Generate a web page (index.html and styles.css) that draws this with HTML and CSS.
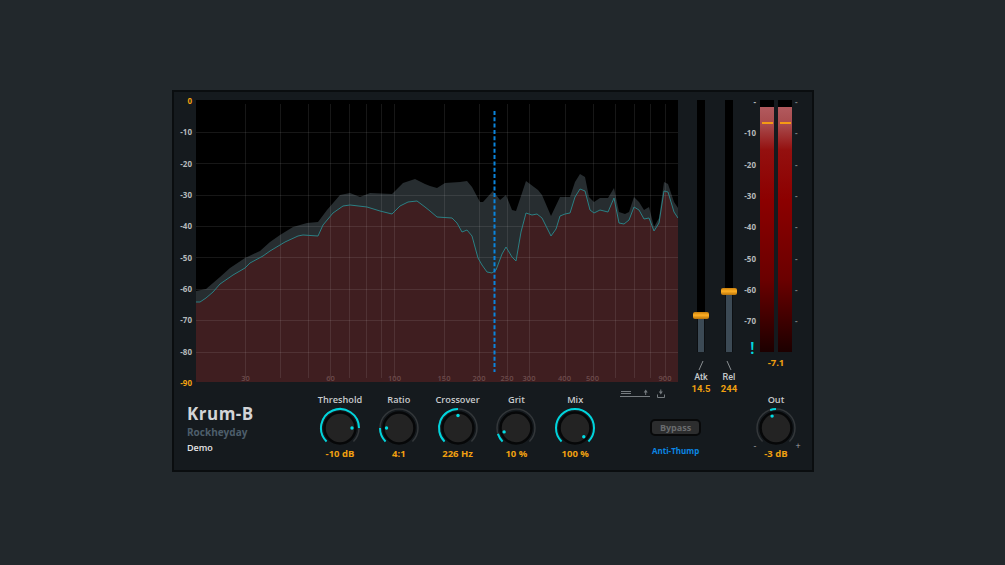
FILE: index.html
```html
<!DOCTYPE html>
<html lang="en">

<head>
  <meta charset="UTF-8" />
  <meta name="viewport" content="width=device-width, initial-scale=1.0" />
  <title>Krum-B</title>
  <link rel="stylesheet" href="styles.css">
</head>

<body>
  <div class="plugin">

    <div class="top-row">
      <div class="axis">
        <span class="axis-end">0</span>
        <span>-10</span>
        <span>-20</span>
        <span>-30</span>
        <span>-40</span>
        <span>-50</span>
        <span>-60</span>
        <span>-70</span>
        <span>-80</span>
        <span class="axis-end">-90</span>
      </div>

      <!-- spectrum, viewBox is in page pixels -->
      <svg class="graph" width="482" height="282" viewBox="196 100 482 282">
        <rect class="graph-bg" x="196" y="100" width="482" height="282" />
        <polygon class="env-fill" points="196,291 206,289 220,277 230,268 245,258 260,251 270,242 280,235 293,227 307,223 318,222 327,210 340,195 350,193 360,197 370,193 392,194 403,183 415,179 425,184 430,186 437,188 445,183 460,182 467,181 472,187 480,202 483,202 493,191 500,200 506,195 512,210 516,211 526,181 538,190 542,195 551,216 560,197 570,197 575,182 580,174 585,177 589,197 594,202 600,198 608,198 614,188 619,212 625,214 629,212 634,197 639,202 644,210 649,207 654,227 659,218 664,182 668,184 674,202 678,208 678,382 196,382" />
        <polygon class="spec-fill" points="196,302 200,302 206,298 213,292 220,284 233,275 245,268 250,263 263,256 270,251 285,242 298,236 303,235 318,236 323,225 333,213 343,206 350,205 367,207 380,211 392,214 400,206 408,202 417,201 425,207 430,211 437,217 452,218 457,223 462,232 467,230 472,236 478,258 482,265 487,272 492,273 496,270 502,254 506,247 512,257 516,261 521,232 526,213 532,215 537,214 542,218 551,236 556,229 560,216 565,214 570,213 575,197 580,189 585,191 590,210 594,213 600,210 608,212 614,198 619,223 624,224 629,220 634,207 639,210 644,219 649,218 654,231 659,223 664,191 668,192 674,212 678,218 678,382 196,382" />
        <g class="grid-lines">
          <line x1="196" x2="678" y1="132.500" y2="132.500" />
          <line x1="196" x2="678" y1="163.500" y2="163.500" />
          <line x1="196" x2="678" y1="195.500" y2="195.500" />
          <line x1="196" x2="678" y1="226.500" y2="226.500" />
          <line x1="196" x2="678" y1="257.500" y2="257.500" />
          <line x1="196" x2="678" y1="289.500" y2="289.500" />
          <line x1="196" x2="678" y1="320.500" y2="320.500" />
          <line x1="196" x2="678" y1="352.500" y2="352.500" />
          <line x1="245.500" x2="245.500" y1="104" y2="378" />
          <line x1="280.500" x2="280.500" y1="104" y2="378" />
          <line x1="308.500" x2="308.500" y1="104" y2="378" />
          <line x1="330.500" x2="330.500" y1="104" y2="378" />
          <line x1="349.500" x2="349.500" y1="104" y2="378" />
          <line x1="366.500" x2="366.500" y1="104" y2="378" />
          <line x1="381.500" x2="381.500" y1="104" y2="378" />
          <line x1="394.500" x2="394.500" y1="104" y2="378" />
          <line x1="444.500" x2="444.500" y1="104" y2="378" />
          <line x1="479.500" x2="479.500" y1="104" y2="378" />
          <line x1="507.500" x2="507.500" y1="104" y2="378" />
          <line x1="529.500" x2="529.500" y1="104" y2="378" />
          <line x1="565.500" x2="565.500" y1="104" y2="378" />
          <line x1="593.500" x2="593.500" y1="104" y2="378" />
          <line x1="615.500" x2="615.500" y1="104" y2="378" />
          <line x1="634.500" x2="634.500" y1="104" y2="378" />
          <line x1="650.500" x2="650.500" y1="104" y2="378" />
          <line x1="665.500" x2="665.500" y1="104" y2="378" />
        </g>
        <polyline class="spec-line" points="196,302 200,302 206,298 213,292 220,284 233,275 245,268 250,263 263,256 270,251 285,242 298,236 303,235 318,236 323,225 333,213 343,206 350,205 367,207 380,211 392,214 400,206 408,202 417,201 425,207 430,211 437,217 452,218 457,223 462,232 467,230 472,236 478,258 482,265 487,272 492,273 496,270 502,254 506,247 512,257 516,261 521,232 526,213 532,215 537,214 542,218 551,236 556,229 560,216 565,214 570,213 575,197 580,189 585,191 590,210 594,213 600,210 608,212 614,198 619,223 624,224 629,220 634,207 639,210 644,219 649,218 654,231 659,223 664,191 668,192 674,212 678,218" />
        <line class="crossover-line" x1="494.500" x2="494.500" y1="111" y2="372" />
        <g class="freq-labels">
          <text x="245.500" y="381">30</text>
          <text x="330.500" y="381">60</text>
          <text x="394.500" y="381">100</text>
          <text x="444" y="381">150</text>
          <text x="479" y="381">200</text>
          <text x="507" y="381">250</text>
          <text x="529" y="381">300</text>
          <text x="564.500" y="381">400</text>
          <text x="592.500" y="381">500</text>
          <text x="665" y="381">900</text>
        </g>
      </svg>

      <div class="fader">
        <div class="fader-track">
          <div class="fader-handle"></div>
          <div class="fader-fill" style="height:33px"></div>
        </div>
        <svg class="fader-curve" width="6" height="9" viewBox="0 0 6 9"><path d="M1 9L5 0" /></svg>
        <div class="fader-name">Atk</div>
        <div class="fader-value">14.5</div>
      </div>
      <div class="fader">
        <div class="fader-track">
          <div class="fader-handle"></div>
          <div class="fader-fill" style="height:57px"></div>
        </div>
        <svg class="fader-curve" width="6" height="9" viewBox="0 0 6 9"><path d="M1 0L5 9" /></svg>
        <div class="fader-name">Rel</div>
        <div class="fader-value">244</div>
      </div>

      <div class="meter-scale">
        <span>-</span>
        <span>-10</span>
        <span>-20</span>
        <span>-30</span>
        <span>-40</span>
        <span>-50</span>
        <span>-60</span>
        <span>-70</span>
        <span class="clip-mark">!</span>
      </div>
      <div class="meter">
        <div class="meter-bars">
          <div class="meter-bar"><div class="meter-peak"></div></div>
          <div class="meter-bar"><div class="meter-peak"></div></div>
        </div>
        <div class="meter-value">-7.1</div>
      </div>
      <div class="meter-ticks">
        <span>-</span>
        <span>-</span>
        <span>-</span>
        <span>-</span>
        <span>-</span>
        <span>-</span>
        <span>-</span>
        <span>-</span>
      </div>
    </div>

    <div class="bottom-row">
      <div class="brand">
        <div class="brand-name">Krum-B</div>
        <div class="brand-maker">Rockheyday</div>
        <div class="brand-demo">Demo</div>
      </div>

      <div class="knob-row">
        <div class="knob">
          <div class="knob-label">Threshold</div>
          <svg class="knob-svg" width="44" height="44" viewBox="0 0 44 44">
            <path class="knob-track" d="M8.560 35.440 A19 19 0 1 1 35.440 35.440" />
            <path class="knob-arc" d="M8.560 35.440 A19 19 0 1 1 41 22" />
            <circle class="knob-body" cx="22" cy="22" r="15.500" />
            <circle class="knob-dot" cx="34" cy="22" r="1.700" />
          </svg>
          <div class="knob-value">-10 dB</div>
        </div>
        <div class="knob">
          <div class="knob-label">Ratio</div>
          <svg class="knob-svg" width="44" height="44" viewBox="0 0 44 44">
            <path class="knob-track" d="M8.560 35.440 A19 19 0 1 1 35.440 35.440" />
            <path class="knob-arc" d="M8.560 35.440 A19 19 0 0 1 3 22" />
            <circle class="knob-body" cx="22" cy="22" r="15.500" />
            <circle class="knob-dot" cx="9.500" cy="22" r="1.700" />
          </svg>
          <div class="knob-value">4:1</div>
        </div>
        <div class="knob">
          <div class="knob-label">Crossover</div>
          <svg class="knob-svg" width="44" height="44" viewBox="0 0 44 44">
            <path class="knob-track" d="M8.560 35.440 A19 19 0 1 1 35.440 35.440" />
            <path class="knob-arc" d="M8.560 35.440 A19 19 0 0 1 22 3" />
            <circle class="knob-body" cx="22" cy="22" r="15.500" />
            <circle class="knob-dot" cx="22" cy="9.500" r="1.700" />
          </svg>
          <div class="knob-value">226 Hz</div>
        </div>
        <div class="knob">
          <div class="knob-label">Grit</div>
          <svg class="knob-svg" width="44" height="44" viewBox="0 0 44 44">
            <path class="knob-track" d="M8.560 35.440 A19 19 0 1 1 35.440 35.440" />
            <path class="knob-arc" d="M8.560 35.440 A19 19 0 0 1 3.930 27.870" />
            <circle class="knob-body" cx="22" cy="22" r="15.500" />
            <circle class="knob-dot" cx="10.100" cy="25.900" r="1.700" />
          </svg>
          <div class="knob-value">10 %</div>
        </div>
        <div class="knob">
          <div class="knob-label">Mix</div>
          <svg class="knob-svg" width="44" height="44" viewBox="0 0 44 44">
            <path class="knob-arc" d="M8.560 35.440 A19 19 0 1 1 35.440 35.440" />
            <circle class="knob-body" cx="22" cy="22" r="15.500" />
            <circle class="knob-dot" cx="30.800" cy="30.800" r="1.700" />
          </svg>
          <div class="knob-value">100 %</div>
        </div>
      </div>

      <div class="bypass-col">
        <svg class="preset-icons" width="46" height="10" viewBox="620 389 46 10">
          <path d="M621 391.500h10M621 393.500h10M620 396.500h30" />
          <path d="M645.700 395v-4" />
          <path class="icon-head" d="M643.700 392.500l2-3 2 3z" />
          <path d="M660.800 389.500v3" />
          <path class="icon-head" d="M658.800 391.500h4l-2 3z" />
          <path class="icon-tray" d="M657.500 394.500v3h7v-3" />
        </svg>
        <button class="bypass">Bypass</button>
        <div class="anti-thump">Anti-Thump</div>
      </div>

      <div class="knob knob-out">
        <div class="knob-label">Out</div>
        <svg class="knob-svg" width="44" height="44" viewBox="0 0 44 44">
          <path class="knob-track" d="M8.560 35.440 A19 19 0 1 1 35.440 35.440" />
          <path class="knob-arc" d="M22 3 A19 19 0 0 0 16.130 3.930" />
          <circle class="knob-body" cx="22" cy="22" r="15.500" />
          <circle class="knob-dot" cx="18.100" cy="10.100" r="1.700" />
        </svg>
        <div class="knob-value">-3 dB</div>
        <span class="out-minus">-</span>
        <span class="out-plus">+</span>
      </div>
    </div>

  </div>
</body>
</html>
```

FILE: styles.css
```css
* {
  box-sizing: border-box;
  font-family: 'Open Sans', 'Liberation Sans', sans-serif;
}

body {
  margin: 0;
  height: 565px;
  overflow: hidden;
  background: #22282c;
  padding: 90px 0 0 172px;
}

.plugin {
  width: 642px;
  height: 382px;
  background: #151a1e;
  border: 2px solid #0a0d0f;
  padding-top: 8px;
}

.top-row {
  display: flex;
  height: 293px;
}

.axis {
  width: 18px;
  height: 294px;
  margin: -5px 4px 0 0;
  display: flex;
  flex-direction: column;
  justify-content: space-between;
  text-align: right;
  font-size: 8px;
  font-weight: 700;
  line-height: 12px;
  color: #b4b8ba;
}

.axis-end {
  color: #f0a010;
}

.graph {
  display: block;
  margin-right: 9px;
}

.graph-bg {
  fill: #000;
}

.env-fill {
  fill: #272d30;
}

.spec-fill {
  fill: #3f1e20;
}

.grid-lines line {
  stroke: rgba(255, 255, 255, 0.09);
  stroke-width: 1;
}

.spec-line {
  fill: none;
  stroke: #2b8084;
  stroke-width: 1;
  stroke-linejoin: round;
}

.crossover-line {
  stroke: #0a84dc;
  stroke-width: 2;
  stroke-dasharray: 4 2.300;
}

.freq-labels text {
  fill: #6d4c4c;
  font-size: 7.500px;
  font-weight: 600;
  text-anchor: middle;
}

.fader {
  width: 28px;
  display: flex;
  flex-direction: column;
  align-items: center;
}

.fader-track {
  width: 8px;
  height: 252px;
  flex: none;
  background: #000;
  display: flex;
  flex-direction: column;
  justify-content: flex-end;
  align-items: center;
}

.fader-handle {
  width: 16px;
  height: 7px;
  flex: none;
  border-radius: 2px;
  background: linear-gradient(#c97f0c, #ffb024 45%, #b8730a);
}

.fader-fill {
  width: 8px;
  background: #3c4a55;
  border: 1px solid #0c0f12;
  border-width: 0 1px;
}

.fader-curve {
  display: block;
  flex: none;
  margin: 9px 0 2px;
  fill: none;
  stroke: #8a8f92;
  stroke-width: 1;
}

.fader-name {
  font-family: Roboto, sans-serif;
  font-size: 9px;
  font-weight: 500;
  line-height: 11px;
  color: #c4c8ca;
}

.fader-value {
  font-family: Roboto, sans-serif;
  font-size: 9.500px;
  font-weight: 700;
  line-height: 11px;
  color: #f0a010;
}

.meter-scale {
  width: 13px;
  margin: -14px 4px 0 0;
  display: flex;
  flex-direction: column;
  text-align: right;
  font-size: 8px;
  font-weight: 700;
  color: #b4b8ba;
}

.meter-scale span {
  height: 31.330px;
  line-height: 31.330px;
  white-space: nowrap;
}

.meter-scale .clip-mark {
  color: #00d8e0;
  font-size: 17px;
  font-weight: 600;
  line-height: 22px;
  text-align: left;
  padding-left: 7px;
}

.meter {
  width: 32px;
  display: flex;
  flex-direction: column;
  align-items: center;
}

.meter-bars {
  display: flex;
  gap: 4px;
  height: 252px;
}

.meter-bar {
  position: relative;
  width: 14px;
  background: linear-gradient(#000 7px, #b25a5e 7px, #a84a4c 25px, #94100f 50px, #8c0000 100px, #6a0000 180px, #1c0000 252px);
}

.meter-peak {
  position: absolute;
  top: 22px;
  left: 2px;
  right: 1px;
  height: 2px;
  background: #f59a14;
}

.meter-value {
  margin-top: 5px;
  font-size: 9.500px;
  font-weight: 700;
  line-height: 12px;
  color: #f0a010;
}

.meter-ticks {
  margin: -14px 0 0 3px;
  display: flex;
  flex-direction: column;
  font-size: 8px;
  font-weight: 700;
  color: #757b7f;
}

.meter-ticks span {
  height: 31.330px;
  line-height: 31.330px;
}

.bottom-row {
  display: flex;
  height: 79px;
}

.brand {
  width: 136.600px;
  padding: 11px 0 0 13px;
}

.brand-name {
  font-size: 17px;
  font-weight: 700;
  line-height: 20px;
  letter-spacing: 0.5px;
  color: #d2d4d6;
}

.brand-maker {
  font-size: 10px;
  font-weight: 700;
  line-height: 16px;
  color: #4d5e6b;
}

.brand-demo {
  font-size: 9px;
  font-weight: 600;
  line-height: 16px;
  color: #e4e4e4;
}

.knob-row {
  display: flex;
}

.knob {
  width: 58.800px;
  display: flex;
  flex-direction: column;
  align-items: center;
}

.knob-label {
  margin-top: 1px;
  font-size: 9.200px;
  font-weight: 600;
  line-height: 12px;
  color: #c8cacc;
}

.knob-svg {
  display: block;
  margin-top: -0.500px;
}

.knob-track {
  fill: none;
  stroke: #33373a;
  stroke-width: 1.500;
}

.knob-arc {
  fill: none;
  stroke: #00d4dc;
  stroke-width: 2;
}

.knob-body {
  fill: #232323;
  stroke: #060708;
  stroke-width: 2.500;
}

.knob-dot {
  fill: #00dce4;
}

.knob-value {
  margin-top: -2px;
  font-size: 9.500px;
  font-weight: 700;
  line-height: 11px;
  color: #f0a010;
}

.bypass-col {
  width: 142px;
  display: flex;
  flex-direction: column;
  align-items: center;
}

.preset-icons {
  display: block;
  align-self: flex-start;
  margin: -4px 0 0 15px;
  fill: none;
  stroke: #767c80;
  stroke-width: 1;
}

.preset-icons .icon-head {
  fill: #767c80;
  stroke: none;
}

.bypass {
  width: 51px;
  height: 17px;
  margin-top: 20px;
  padding: 0 0 1px;
  background: #2c2d2e;
  border: 2px solid #08090a;
  border-radius: 5px;
  font-size: 9px;
  font-weight: 700;
  color: #696b6d;
}

.anti-thump {
  margin-top: 9px;
  font-size: 8px;
  font-weight: 700;
  color: #0a86e4;
}

.knob-out {
  position: relative;
}

.out-minus,
.out-plus {
  position: absolute;
  top: 48px;
  font-size: 9px;
  line-height: 10px;
  color: #a0a4a6;
}

.out-minus {
  left: 7px;
}

.out-plus {
  left: 49px;
}
```
